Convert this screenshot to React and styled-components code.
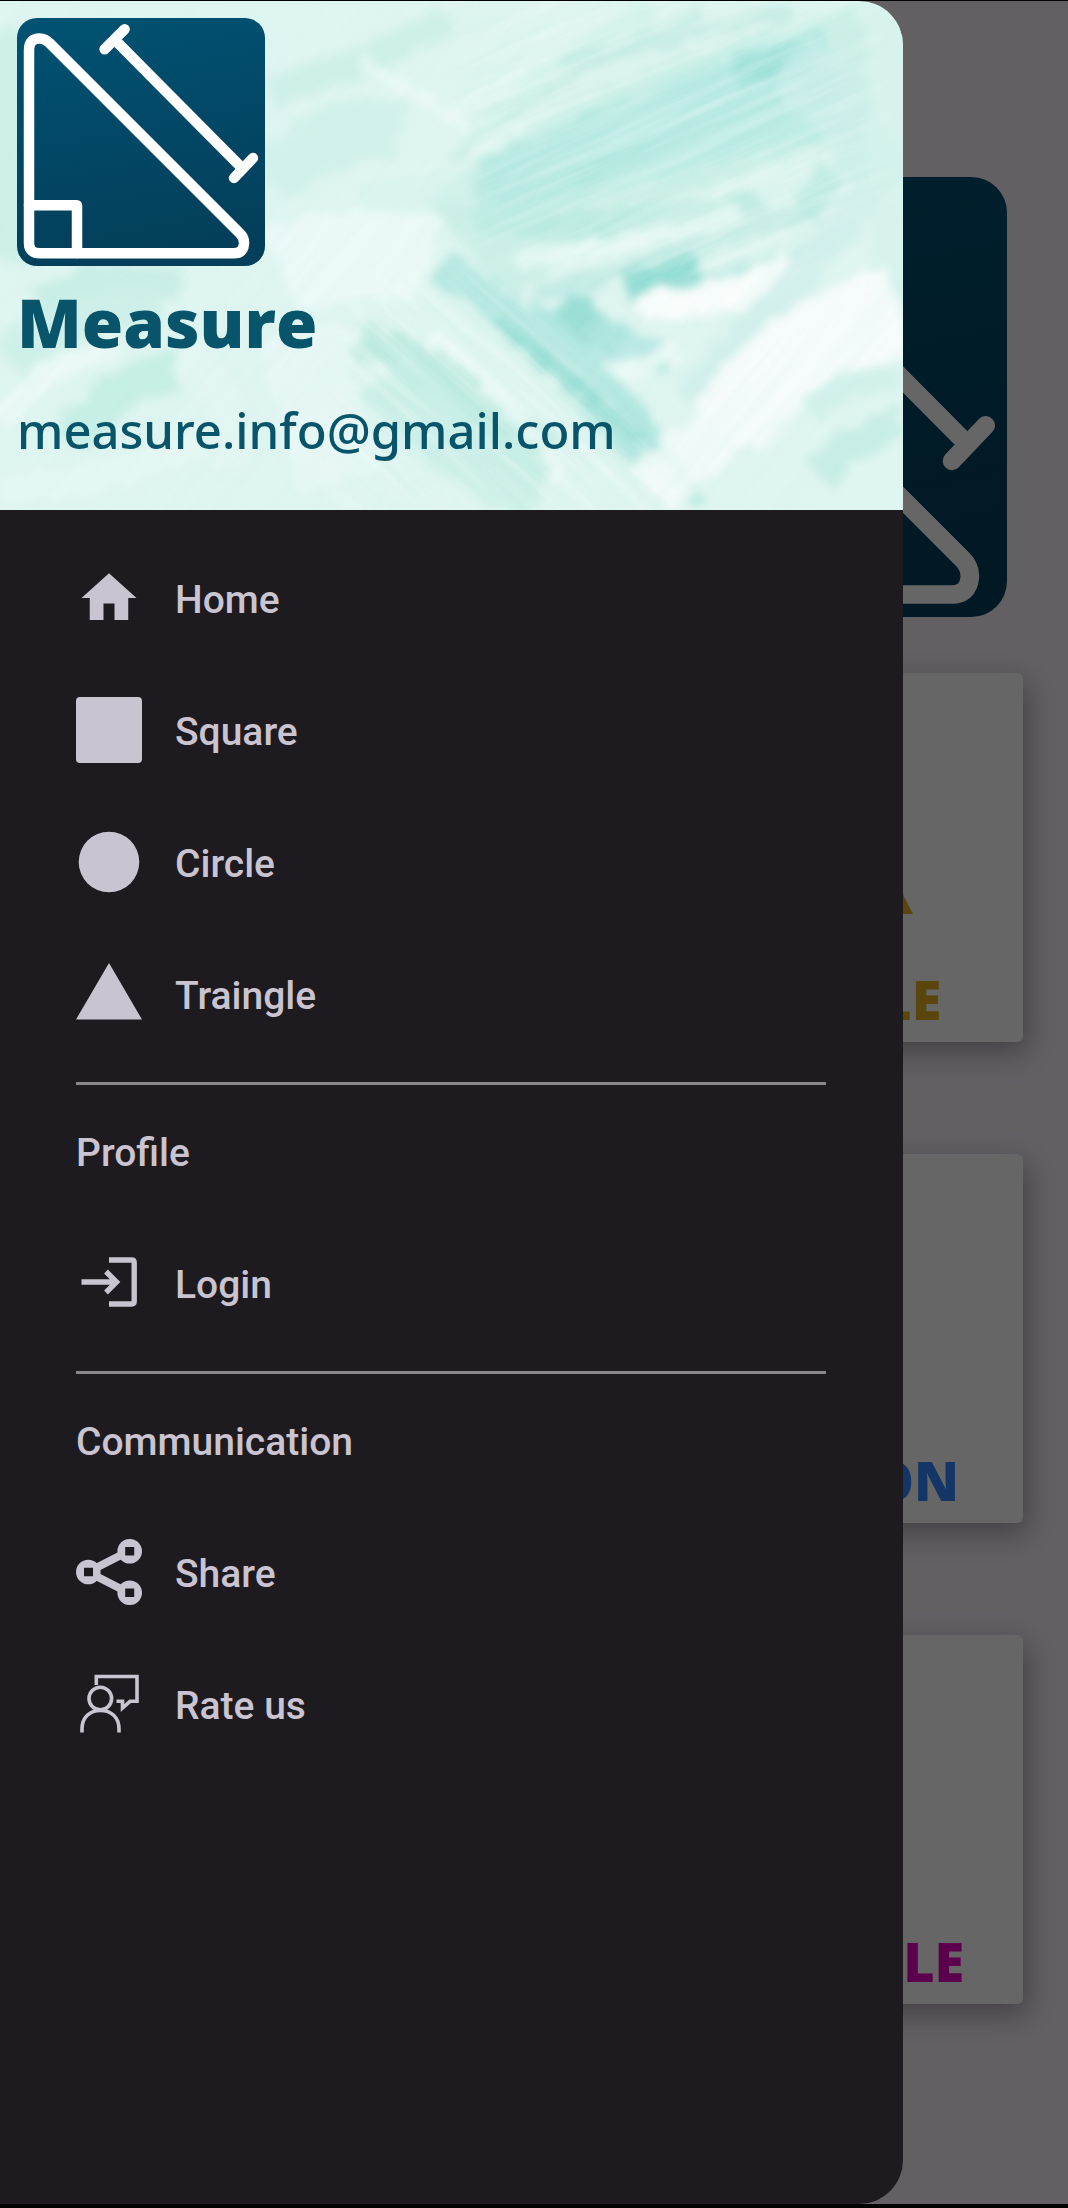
import React from "react";
import styled, { createGlobalStyle } from "styled-components";

const GlobalStyle = createGlobalStyle`
  * { box-sizing: border-box; }
  body { margin: 0; background: #000; font-family: Roboto, "Liberation Sans", sans-serif; }
  h1, h2, p, ul { margin: 0; padding: 0; }
  ul { list-style: none; }
`;

const Page = styled.div`
  min-height: 100vh;
  padding: 1px 0 4px;
  display: flex;
  flex-direction: column;
`;

const Screen = styled.div`
  position: relative;
  flex: 1;
  background: #f7f0fb;
  overflow: hidden;
`;

const Content = styled.main`
  display: flex;
  flex-direction: column;
  align-items: flex-end;
  gap: 56px;
  padding: 176px 45px 0;
`;

const Hero = styled.div`
  width: 440px;
  height: 440px;
  margin-right: 16px;
`;

const Cards = styled.div`
  display: flex;
  flex-direction: column;
  gap: 112px;
  width: 436px;
`;

const Card = styled.section`
  height: 369px;
  padding: 31px 16px 16px;
  display: flex;
  flex-direction: column;
  align-items: center;
  justify-content: space-between;
  border-radius: 6px;
  background: #fff;
  box-shadow: 4px 10px 30px rgba(0, 0, 0, 0.34);
`;

const CardArt = styled.div`
  width: 216px;
  height: 210px;
  color: ${(p) => p.$color};
`;

const CardLabel = styled.h2`
  color: ${(p) => p.$color};
  font: 800 54px/54px "Open Sans", "Noto Sans", sans-serif;
`;

const Scrim = styled.div`
  position: absolute;
  inset: 0;
  background: rgba(0, 0, 0, 0.6);
`;

const Drawer = styled.aside`
  position: absolute;
  inset: 0 auto 0 0;
  width: calc(100% - 165px);
  border-radius: 0 44px 44px 0;
  overflow: hidden;
  background: #1d1b20;
  color: #cac4d0;
`;

const Header = styled.header`
  position: relative;
  height: 509px;
  padding: 17px;
  display: flex;
  flex-direction: column;
  color: #08546a;
`;

const Paint = styled.svg`
  position: absolute;
  inset: 0;
  width: 100%;
  height: 100%;
`;

const Brand = styled.div`
  position: relative;
  display: flex;
  flex-direction: column;
`;

const BrandLogo = styled.div`
  width: 248px;
  height: 248px;
`;

const BrandName = styled.h1`
  font: 800 67px/112px "Open Sans", "Noto Sans", sans-serif;
`;

const BrandMail = styled.p`
  font: 500 49px/104px "Noto Sans", "Open Sans", sans-serif;
`;

const Nav = styled.nav`
  padding: 22px 77px 22px 76px;
`;

const Item = styled.a`
  height: 132px;
  display: flex;
  align-items: center;
  gap: 33px;
  color: inherit;
  text-decoration: none;
`;

const ItemLabel = styled.span`
  padding-top: 4px;
  font-size: 39px;
  font-weight: 500;
  line-height: 52px;
`;

const Subheader = styled.h2`
  height: 132px;
  padding-top: 4px;
  font-size: 39px;
  font-weight: 500;
  line-height: 128px;
`;

const Divider = styled.hr`
  height: 3px;
  margin: 22px 0 0;
  border: 0;
  background: #89868e;
`;

const Glyph = styled.svg`
  width: 66px;
  height: 66px;
  flex: none;
  fill: ${(p) => (p.$outline ? "none" : "currentColor")};
  stroke: ${(p) => (p.$outline ? "currentColor" : "none")};
  stroke-width: ${(p) => p.$outline || 0};
`;

function Logo({ id, radius }) {
  return (
    <svg width="100%" height="100%" viewBox="0 0 248 248" aria-hidden="true">
      <defs>
        <linearGradient id={id} x1="0" y1="0" x2="0.2" y2="1">
          <stop offset="0" stopColor="#015273" />
          <stop offset="1" stopColor="#033f5a" />
        </linearGradient>
      </defs>
      <rect width="248" height="248" rx={radius} fill={`url(#${id})`} />
      <g fill="none" stroke="#fff" strokeWidth="10.5" strokeLinecap="round" strokeLinejoin="round">
        <path d="M12 225V32Q12 20.5 22.6 20.5Q28 20.5 32.500 25L223 215.500Q227.500 220 227 226Q226 235.300 217 235.300H23Q12 235.300 12 225Z" />
        <path d="M12 187.300H60V235" />
        <path d="M98 22L222 147" />
        <path d="M87.600 31.300L107.600 11.300M217 160L236 140" />
      </g>
    </svg>
  );
}

// Each streak: path, width, colour, opacity
const STREAKS = [
  ["M470 250Q600 130 870 70", 130, "#c6ede6", 0.8],
  ["M490 190Q640 120 830 55", 60, "#ace6de", 0.75],
  ["M480 205Q640 160 840 110", 44, "#b4e8df", 0.7],
  ["M450 160Q560 70 700 10", 10, "#bfeae2", 0.8],
  ["M460 145Q560 50 650 8", 16, "#d0f1eb", 0.8],
  ["M560 60Q680 40 790 8", 14, "#bfeae2", 0.7],
  ["M735 66L810 60", 38, "#97dfd6", 0.75],
  ["M790 60Q830 90 890 190", 60, "#cbeee8", 0.8],
  ["M890 0L895 300", 50, "#d6f3ee", 0.8],
  ["M475 222Q600 235 760 200", 28, "#b5e8df", 0.8],
  ["M520 260Q640 240 740 212", 18, "#e9f8f6", 0.9],
  ["M540 292Q660 262 810 205", 20, "#bce9e1", 0.8],
  ["M625 285L700 268", 32, "#8bdad0", 0.9],
  ["M700 278Q760 268 850 235", 12, "#b9e8e1", 0.8],
  ["M640 308Q740 300 800 262", 32, "#fafdfc", 0.95],
  ["M560 305L620 345", 34, "#94dcd3", 0.9],
  ["M590 325L670 365", 30, "#b0e6de", 0.8],
  ["M600 380L680 350", 20, "#ecf9f7", 0.9],
  ["M440 265Q520 310 650 460", 36, "#ace5dc", 0.85],
  ["M500 320Q560 370 640 440", 12, "#8ddad0", 0.7],
  ["M530 305Q620 370 700 505", 16, "#a9e5dc", 0.85],
  ["M360 335Q450 370 550 460", 40, "#b9e9df", 0.9],
  ["M380 375Q440 440 540 495", 60, "#c6eee6", 0.8],
  ["M430 335Q500 385 560 470", 14, "#f1fbf9", 0.85],
  ["M690 400Q760 320 870 190", 34, "#d2efec", 0.9],
  ["M730 430Q790 340 900 310", 90, "#f8fcfc", 0.9],
  ["M650 490Q720 420 780 400", 60, "#f4fbfa", 0.85],
  ["M760 470Q800 390 870 380", 20, "#dff5f1", 0.8],
  ["M820 475Q850 440 900 420", 30, "#c1ebe4", 0.8],
  ["M810 410Q850 370 900 380", 26, "#d0f0ea", 0.8],
  ["M805 210L835 170", 30, "#aee5dc", 0.7],
  ["M270 90Q370 60 450 20", 28, "#cbefe8", 0.85],
  ["M270 180Q330 120 400 130", 60, "#cdf0ea", 0.7],
  ["M360 60Q430 100 470 130", 12, "#eefaf8", 0.8],
  ["M360 200Q440 190 470 180", 30, "#d7f3ee", 0.6],
  ["M280 270Q360 240 430 260", 90, "#ecf9f7", 0.9],
  ["M40 300Q100 270 180 285", 32, "#c5ede5", 0.9],
  ["M10 360Q70 310 160 300", 44, "#cdf0e9", 0.9],
  ["M70 440Q120 370 180 370", 40, "#c2ede4", 0.85],
  ["M180 350Q240 390 230 470", 40, "#e3f6f3", 0.9],
  ["M0 420Q60 350 120 350", 24, "#ecf9f7", 0.9],
  ["M0 490Q120 480 200 440", 30, "#e6f7f4", 0.8],
  ["M300 330L340 480", 90, "#e9f8f6", 0.8],
  ["M0 30Q8 200 0 260", 60, "#cdf0e8", 0.9],
];

function PaintBackdrop() {
  return (
    <Paint viewBox="0 0 903 509" preserveAspectRatio="none" aria-hidden="true">
      <defs>
        <filter id="brush" x="-5%" y="-5%" width="110%" height="110%">
          <feTurbulence type="fractalNoise" baseFrequency="0.04 0.07" numOctaves="4" seed="8" result="n" />
          <feDisplacementMap in="SourceGraphic" in2="n" scale="22" xChannelSelector="R" yChannelSelector="G" />
          <feGaussianBlur stdDeviation="4" />
        </filter>
        <filter id="bristle" x="0" y="0" width="100%" height="100%">
          <feTurbulence type="fractalNoise" baseFrequency="0.004 0.09" numOctaves="4" seed="3" />
          <feColorMatrix values="0 0 0 0 0.62  0 0 0 0 0.88  0 0 0 0 0.84  1.8 0 0 0 -0.72" />
        </filter>
        <filter id="bristleLight" x="0" y="0" width="100%" height="100%">
          <feTurbulence type="fractalNoise" baseFrequency="0.005 0.08" numOctaves="4" seed="21" />
          <feColorMatrix values="0 0 0 0 1  0 0 0 0 1  0 0 0 0 1  2.4 0 0 0 -1" />
        </filter>
        <filter id="feather" x="-20%" y="-20%" width="140%" height="140%">
          <feGaussianBlur stdDeviation="22" />
        </filter>
        <mask id="upperStrokes">
          <path d="M450 0H860L880 200L700 280L480 250Z" fill="#fff" filter="url(#feather)" />
        </mask>
        <mask id="lowerStrokes">
          <path d="M350 300L500 260L700 509H320Z" fill="#fff" filter="url(#feather)" />
        </mask>
      </defs>
      <rect width="903" height="509" fill="#dff5f1" />
      <g filter="url(#brush)" fill="none" strokeLinecap="butt">
        {STREAKS.map(([d, w, c, o]) => (
          <path key={d} d={d} stroke={c} strokeWidth={w} opacity={o} />
        ))}
      </g>
      <g mask="url(#upperStrokes)">
        <g transform="rotate(-24 650 200)">
          <rect x="200" y="-250" width="900" height="800" filter="url(#bristle)" opacity="0.5" />
          <rect x="200" y="-250" width="900" height="800" filter="url(#bristleLight)" opacity="0.28" />
        </g>
      </g>
      <g mask="url(#lowerStrokes)">
        <g transform="rotate(42 500 400)">
          <rect x="150" y="100" width="700" height="600" filter="url(#bristle)" opacity="0.4" />
          <rect x="150" y="100" width="700" height="600" filter="url(#bristleLight)" opacity="0.3" />
        </g>
      </g>
      <g transform="rotate(-50 200 300)" opacity="0.18">
        <rect x="-400" y="-300" width="1300" height="1200" filter="url(#bristle)" />
      </g>
    </Paint>
  );
}

const icons = {
  home: (
    <Glyph viewBox="0 0 24 24" aria-hidden="true">
      <path d="M10 20v-6h4v6h5v-8h3L12 3 2 12h3v8z" />
    </Glyph>
  ),
  square: (
    <Glyph viewBox="0 0 66 66" aria-hidden="true">
      <rect width="66" height="66" rx="4" />
    </Glyph>
  ),
  circle: (
    <Glyph viewBox="0 0 66 66" aria-hidden="true">
      <circle cx="33" cy="33" r="30.300" />
    </Glyph>
  ),
  triangle: (
    <Glyph viewBox="0 0 66 66" aria-hidden="true">
      <path d="M33 2L66 58.500H0Z" />
    </Glyph>
  ),
  login: (
    <Glyph viewBox="0 0 66 66" $outline={5.4} aria-hidden="true">
      <path d="M33 10H55.500Q58.200 10 58.200 12.700V51.300Q58.200 54 55.500 54H33" />
      <path d="M5.500 32H41M30 21.500L40.500 32L30 42.500" />
    </Glyph>
  ),
  share: (
    <Glyph viewBox="0 0 66 66" fillRule="evenodd" aria-hidden="true">
      <path d="M0 33a12.300 12.300 0 1 0 24.600 0a12.300 12.300 0 1 0-24.600 0M8 28.700H17V37.300H8Z" />
      <path d="M41.400 12.300a12.300 12.300 0 1 0 24.600 0a12.300 12.300 0 1 0-24.600 0M49.200 8H58.200V16.600H49.200Z" />
      <path d="M41.400 53.700a12.300 12.300 0 1 0 24.600 0a12.300 12.300 0 1 0-24.600 0M49.200 49.400H58.200V58H49.200Z" />
      <path d="M20 24.500L42.500 13L45 20.500L22.500 32ZM20 41.500L42.500 53L45 45.500L22.500 34Z" />
    </Glyph>
  ),
  rate: (
    <Glyph viewBox="0 0 66 66" $outline={3.6} aria-hidden="true">
      <path d="M20.300 14V5.500H61V30.300H54L46.500 37V30.300H40.500" />
      <circle cx="24.300" cy="27.500" r="11.300" />
      <path d="M6 61.500V58C6 46 14 39.500 24.500 39.500S43 46 43 58V61.500" />
    </Glyph>
  ),
};

function NavItem({ icon, children }) {
  return (
    <li>
      <Item href="#">
        {icons[icon]}
        <ItemLabel>{children}</ItemLabel>
      </Item>
    </li>
  );
}

export default function App() {
  return (
    <Page>
      <GlobalStyle />
      <Screen>
        <Content>
          <Hero>
            <Logo id="heroFill" radius={20} />
          </Hero>
          <Cards>
            <Card>
              <CardArt $color="#e1ad1e">
                <svg width="216" height="210" viewBox="0 0 216 210" aria-hidden="true">
                  <path d="M108 0L216 210H0Z" fill="currentColor" />
                </svg>
              </CardArt>
              <CardLabel $color="#e1ad1e">TRIANGLE</CardLabel>
            </Card>
            <Card>
              <CardArt />
              <CardLabel $color="#3287ff">PENTAGON</CardLabel>
            </Card>
            <Card>
              <CardArt />
              <CardLabel $color="#e600c0">RECTANGLE</CardLabel>
            </Card>
          </Cards>
        </Content>
        <Scrim />
        <Drawer>
          <Header>
            <PaintBackdrop />
            <Brand>
              <BrandLogo>
                <Logo id="brandFill" radius={20} />
              </BrandLogo>
              <BrandName>Measure</BrandName>
              <BrandMail>measure.info@gmail.com</BrandMail>
            </Brand>
          </Header>
          <Nav>
            <ul>
              <NavItem icon="home">Home</NavItem>
              <NavItem icon="square">Square</NavItem>
              <NavItem icon="circle">Circle</NavItem>
              <NavItem icon="triangle">Traingle</NavItem>
            </ul>
            <Divider />
            <Subheader>Profile</Subheader>
            <ul>
              <NavItem icon="login">Login</NavItem>
            </ul>
            <Divider />
            <Subheader>Communication</Subheader>
            <ul>
              <NavItem icon="share">Share</NavItem>
              <NavItem icon="rate">Rate us</NavItem>
            </ul>
          </Nav>
        </Drawer>
      </Screen>
    </Page>
  );
}
